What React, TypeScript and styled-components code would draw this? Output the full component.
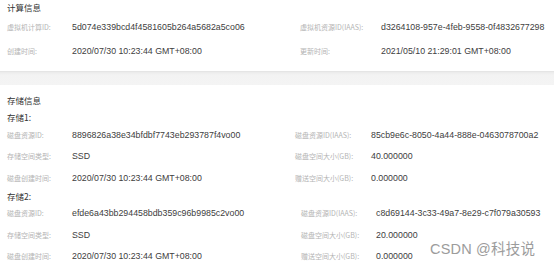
import React from "react";
import styled, { createGlobalStyle } from "styled-components";

const Global = createGlobalStyle`
  html, body { margin: 0; padding: 0; background: #fff; }
  body { font-family: "Liberation Sans", Arial, "Noto Sans CJK SC", sans-serif; }
`;

const Page = styled.div`
  position: relative;
  width: 554px;
  height: 265px;
  overflow: hidden;
  background: #fff;
`;

const Section = styled.section<{ $pt: number; $pb: number }>`
  padding: ${(p) => p.$pt}px 0 ${(p) => p.$pb}px 7px;
  background: #fff;
`;

const Title = styled.div`
  height: 14px;
  line-height: 14px;
  font-size: 8.5px;
  color: #333;
  font-family: "Noto Sans CJK SC", sans-serif;
`;

const SubTitle = styled(Title)`
  margin-top: 3px;
`;

const Band = styled.div`
  height: 14px;
  background: linear-gradient(#e2e2e2 0, #ececec 1.5px, #f3f3f3 4px, #f4f4f4 100%);
`;

const Grid = styled.div<{ $cols: string; $rowH: number; $mt: number }>`
  display: grid;
  grid-template-columns: ${(p) => p.$cols};
  grid-auto-rows: ${(p) => p.$rowH}px;
  align-items: center;
  margin-top: ${(p) => p.$mt}px;
`;

const Label = styled.span`
  font-size: 7px;
  color: #b4b4b4;
  font-family: "Noto Sans CJK SC", "Liberation Sans", sans-serif;
  white-space: nowrap;
`;

const Value = styled.span`
  font-size: 8.8px;
  color: #404040;
  white-space: nowrap;
  font-family: "Liberation Sans", Arial, sans-serif;
`;

const Watermark = styled.div`
  position: absolute;
  left: 430px;
  top: 237px;
  font-size: 14.5px;
  color: #9c9c9c;
  font-family: "Liberation Sans", "Noto Sans CJK SC", sans-serif;
  white-space: nowrap;
  letter-spacing: 0.2px;
`;

type Pair = [string, string];
type Row = [Pair, Pair];

const Rows: React.FC<{ rows: Row[]; cols: string; rowH: number; mt?: number }> = ({ rows, cols, rowH, mt = 0 }) => (
  <Grid $cols={cols} $rowH={rowH} $mt={mt}>
    {rows.map(([l, r], i) => (
      <React.Fragment key={i}>
        <Label>{l[0]}</Label>
        <Value>{l[1]}</Value>
        <Label>{r[0]}</Label>
        <Value>{r[1]}</Value>
      </React.Fragment>
    ))}
  </Grid>
);

const compute: Row[] = [
  [["虚拟机计算ID:", "5d074e339bcd4f4581605b264a5682a5co06"], ["虚拟机资源ID(IAAS):", "d3264108-957e-4feb-9558-0f4832677298"]],
  [["创建时间:", "2020/07/30 10:23:44 GMT+08:00"], ["更新时间:", "2021/05/10 21:29:01 GMT+08:00"]],
];

const store1: Row[] = [
  [["磁盘资源ID:", "8896826a38e34bfdbf7743eb293787f4vo00"], ["磁盘资源ID(IAAS):", "85cb9e6c-8050-4a44-888e-0463078700a2"]],
  [["存储空间类型:", "SSD"], ["磁盘空间大小(GB):", "40.000000"]],
  [["磁盘创建时间:", "2020/07/30 10:23:44 GMT+08:00"], ["赠送空间大小(GB):", "0.000000"]],
];

const store2: Row[] = [
  [["磁盘资源ID:", "efde6a43bb294458bdb359c96b9985c2vo00"], ["磁盘资源ID(IAAS):", "c8d69144-3c33-49a7-8e29-c7f079a30593"]],
  [["存储空间类型:", "SSD"], ["磁盘空间大小(GB):", "20.000000"]],
  [["磁盘创建时间:", "2020/07/30 10:23:44 GMT+08:00"], ["赠送空间大小(GB):", "0.000000"]],
];

export default function App() {
  return (
    <Page>
      <Global />
      <Section $pt={0} $pb={8}>
        <Title>计算信息</Title>
        <Rows rows={compute} cols="65px 228px 81px 1fr" rowH={24} mt={1} />
      </Section>
      <Band />
      <Section $pt={8} $pb={0}>
        <Title>存储信息</Title>
        <SubTitle>存储1:</SubTitle>
        <Rows rows={store1} cols="65px 223px 76px 1fr" rowH={21.5} />
        <Title>存储2:</Title>
        <Rows rows={store2} cols="65px 229px 75px 1fr" rowH={21.5} />
      </Section>
      <Watermark>CSDN @科技说</Watermark>
    </Page>
  );
}
